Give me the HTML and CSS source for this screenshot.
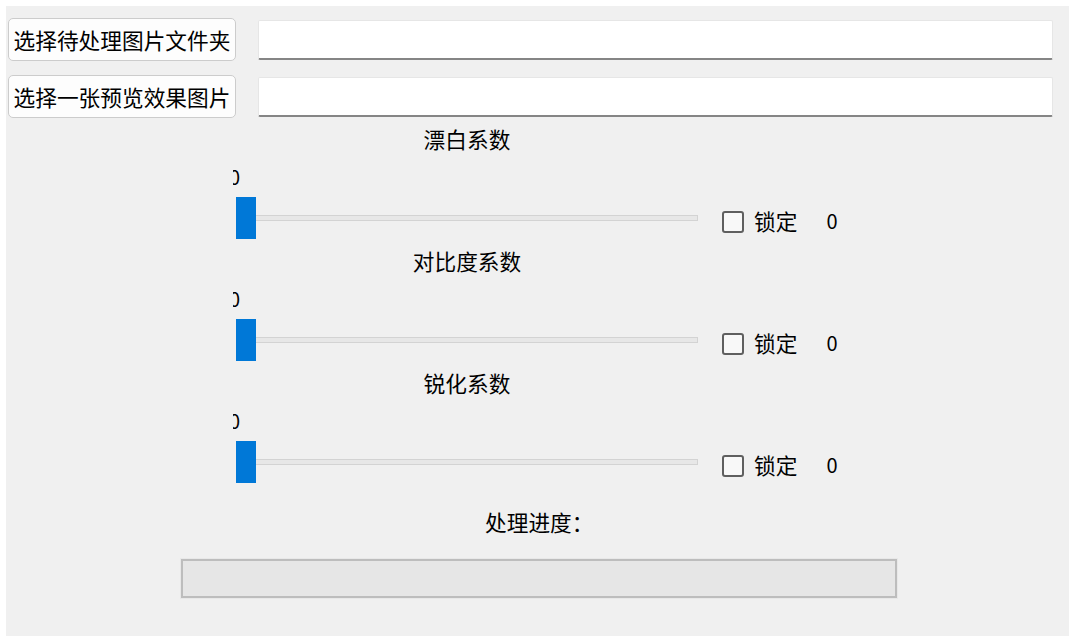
FILE: index.html
```html
<!DOCTYPE html>
<html lang="zh">
<head>
<meta charset="utf-8">
<link rel="stylesheet" href="styles.css">
</head>
<body>
<div class="window">
  <div class="row row1">
    <button class="btn">选择待处理图片文件夹</button>
    <div class="input"></div>
  </div>
  <div class="row row2">
    <button class="btn">选择一张预览效果图片</button>
    <div class="input"></div>
  </div>

  <div class="group first">
    <div class="title">漂白系数</div>
    <div class="tick"><span>0</span></div>
    <div class="slider-row">
      <div class="slider"><div class="groove"></div><div class="handle"></div></div>
      <span class="check"></span><span class="lock">锁定</span><span class="value">0</span>
    </div>
  </div>

  <div class="group">
    <div class="title">对比度系数</div>
    <div class="tick"><span>0</span></div>
    <div class="slider-row">
      <div class="slider"><div class="groove"></div><div class="handle"></div></div>
      <span class="check"></span><span class="lock">锁定</span><span class="value">0</span>
    </div>
  </div>

  <div class="group">
    <div class="title">锐化系数</div>
    <div class="tick"><span>0</span></div>
    <div class="slider-row">
      <div class="slider"><div class="groove"></div><div class="handle"></div></div>
      <span class="check"></span><span class="lock">锁定</span><span class="value">0</span>
    </div>
  </div>

  <div class="progress-label">处理进度：</div>
  <div class="progress"></div>
</div>
</body>
</html>
```

FILE: styles.css
```css
html, body {
  margin: 0;
  padding: 0;
  background: #ffffff;
}
body {
  font-family: "Noto Sans CJK SC", "Noto Sans", sans-serif;
  font-size: 22px;
  color: #000;
}
.window {
  margin: 6px 0 0 6px;
  height: 630px;
  background: #f0f0f0;
  display: flex;
  flex-direction: column;
  overflow: hidden;
}
.row {
  display: flex;
  align-items: center;
  height: 43px;
}
.row1 { margin-top: 12px; }
.row2 { margin-top: 14px; }
.btn {
  margin: 0 0 0 2px;
  width: 228px;
  height: 43px;
  box-sizing: border-box;
  border: 1px solid #cccccc;
  border-radius: 5px;
  background: #fdfdfd;
  font-family: inherit;
  font-size: 21.7px;
  color: #000;
  padding: 0;
  line-height: 1;
  display: flex;
  align-items: center;
  justify-content: center;
}
.input {
  margin-left: 22px;
  width: 795px;
  height: 40px;
  box-sizing: border-box;
  background: #ffffff;
  border: 1px solid #e6e6e6;
  border-bottom: 2px solid #858585;
  border-radius: 2px;
}
.group {
  margin-left: 230px;
  margin-top: 9px;
  display: flex;
  flex-direction: column;
}
.group.first { margin-top: 8px; }
.title {
  width: 462px;
  height: 26px;
  line-height: 26px;
  text-align: center;
  font-size: 21.7px;
}
.tick {
  margin-top: 15px;
  margin-left: -3px;
  width: 7px;
  height: 20px;
  line-height: 20px;
  overflow: hidden;
  display: flex;
  justify-content: flex-end;
  font-size: 20px;
}
.tick span { flex: none; }
.slider-row {
  margin-top: 10px;
  height: 42px;
  display: flex;
  align-items: center;
}
.slider {
  width: 462px;
  height: 42px;
  display: flex;
  align-items: center;
  position: relative;
}
.groove {
  width: 100%;
  height: 6px;
  box-sizing: border-box;
  border: 1px solid #d3d3d3;
  background: #e7e7e7;
}
.handle {
  position: absolute;
  left: 0;
  top: 0;
  width: 20px;
  height: 42px;
  background: #0078d7;
}
.check {
  margin-left: 24px;
  margin-top: 7px;
  width: 22px;
  height: 22px;
  box-sizing: border-box;
  border: 2px solid #5f5f5f;
  border-radius: 3px;
  background: #f8f8f8;
}
.lock {
  margin-left: 10px;
  margin-top: 5px;
  font-size: 21.7px;
  line-height: 26px;
}
.value {
  margin-left: 29px;
  margin-top: 5px;
  font-size: 20px;
  line-height: 26px;
}
.progress-label {
  margin-top: 26px;
  margin-left: 479px;
  height: 26px;
  line-height: 26px;
  font-size: 21.7px;
}
.progress {
  margin-top: 24px;
  margin-left: 175px;
  width: 716px;
  height: 39px;
  box-sizing: border-box;
  border: 2px solid #bdbdbd;
  background: #e6e6e6;
  outline: 1px solid #e8e8e8;
}
```
